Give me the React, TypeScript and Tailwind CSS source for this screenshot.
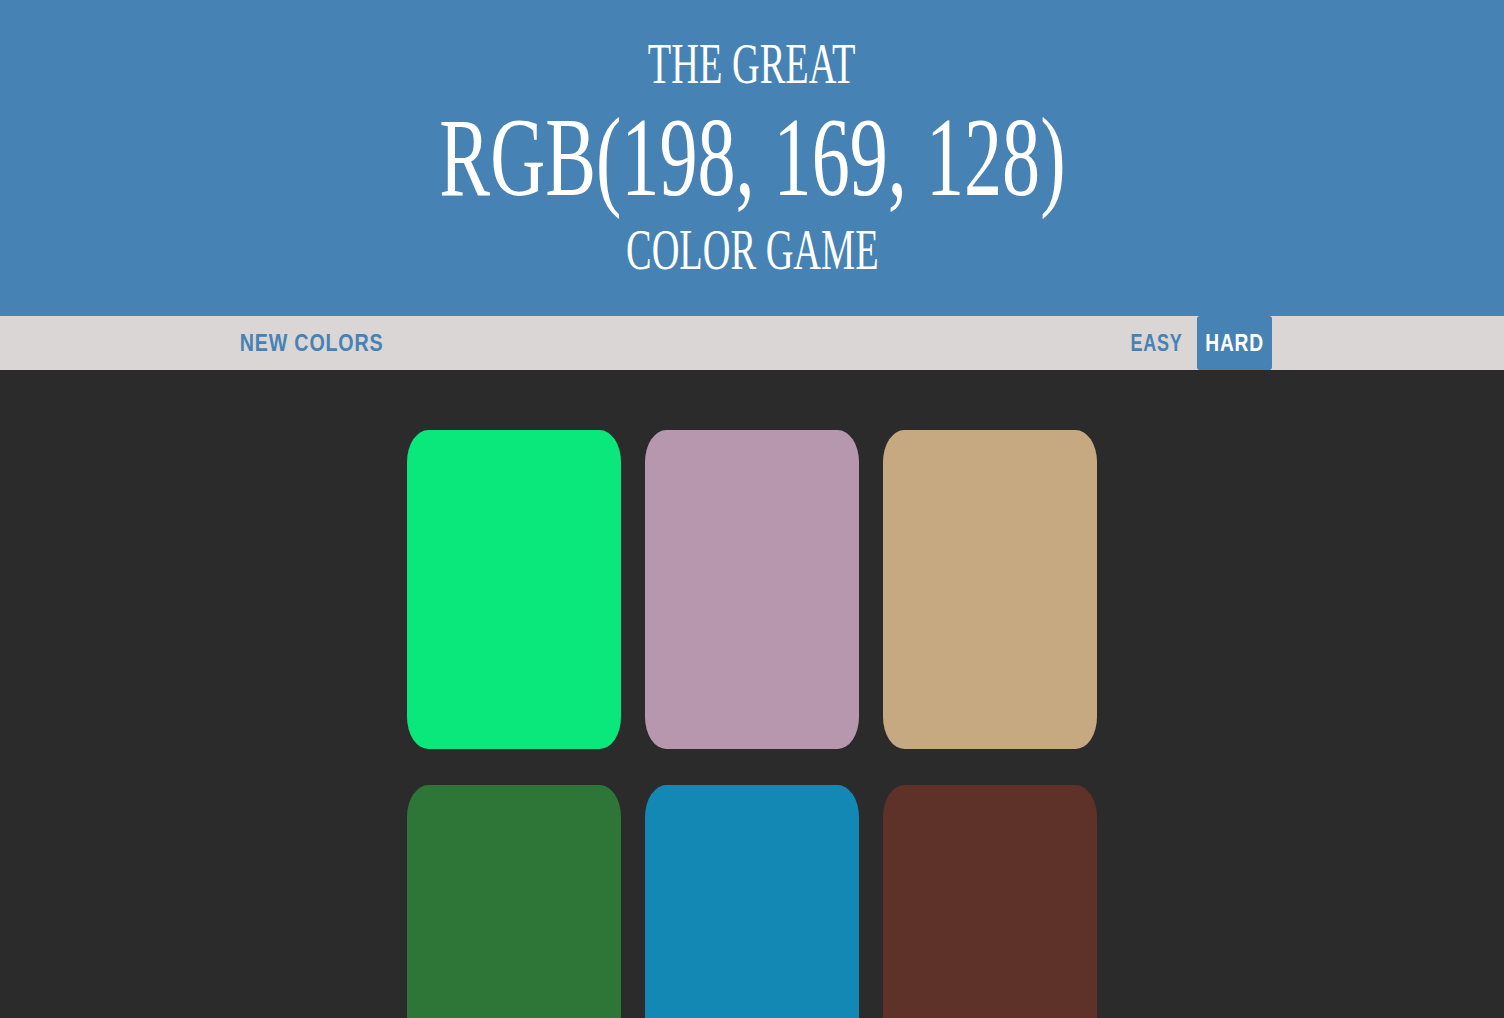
import React from "react";

const tiles = [
  "#0ae87c",
  "#b797ae",
  "#c6a980",
  "#2e7638",
  "#1488b5",
  "#5e3129",
];

export default function App() {
  return (
    <div className="min-h-screen bg-[#2b2b2b]">
      <header
        className="h-[316px] bg-[#4682b4] pt-[36px] text-center text-white"
        style={{ fontFamily: '"Liberation Serif", "Times New Roman", serif' }}
      >
        <div className="h-[56px] text-[56px] leading-[56px]">
          <span className="inline-block scale-x-[0.685]">THE GREAT</span>
        </div>
        <div className="h-[130px] text-[112px] leading-[130px] whitespace-nowrap">
          <span className="inline-block scale-x-[0.68]">RGB(198, 169, 128)</span>
        </div>
        <div className="h-[56px] text-[56px] leading-[56px]">
          <span className="inline-block scale-x-[0.685]">COLOR GAME</span>
        </div>
      </header>

      <nav
        className="h-[54px] bg-[#dad6d5]"
        style={{ fontFamily: '"Liberation Sans", Arial, sans-serif' }}
      >
        <div className="mx-auto flex h-full w-[1040px] items-stretch justify-between">
          <button className="flex w-[158px] items-center justify-center text-[24px] font-bold tracking-[1px] text-[#4682b4]">
            <span className="inline-block scale-x-[0.82] whitespace-nowrap pl-[1px]">NEW COLORS</span>
          </button>
          <div className="flex items-stretch gap-[6px]">
            <button className="flex w-[70px] items-center justify-center text-[24px] font-bold tracking-[1px] text-[#4682b4]">
              <span className="inline-block scale-x-[0.75] whitespace-nowrap pl-[1px]">EASY</span>
            </button>
            <button className="flex w-[75px] items-center justify-center rounded-[3px] bg-[#4682b4] text-[24px] font-bold tracking-[1px] text-white">
              <span className="inline-block scale-x-[0.8] whitespace-nowrap pl-[1px]">HARD</span>
            </button>
          </div>
        </div>
      </nav>

      <main className="mx-auto grid w-[690px] grid-cols-3 gap-x-[24px] gap-y-[36px] pt-[60px]">
        {tiles.map((c, i) => (
          <div
            key={i}
            className="h-[319px] rounded-[10%]"
            style={{ backgroundColor: c }}
          />
        ))}
      </main>
    </div>
  );
}
